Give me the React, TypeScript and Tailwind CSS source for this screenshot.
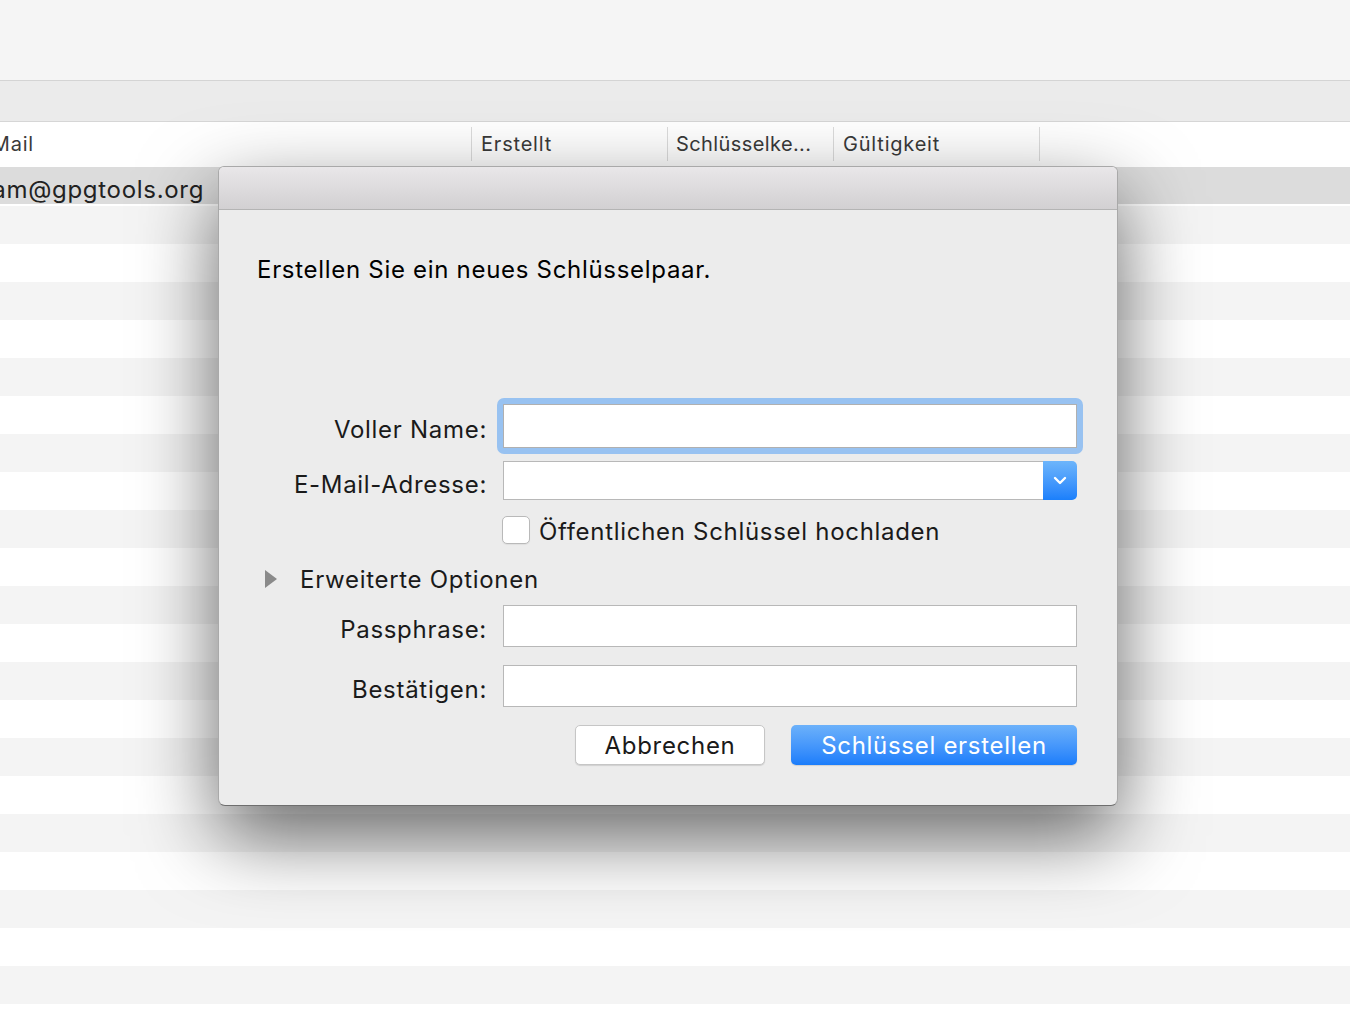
import React from "react";

const font = { fontFamily: "Inter, 'Noto Sans', 'Liberation Sans', sans-serif" };

function Sep() {
  return <div className="h-[34px] w-px shrink-0 self-center bg-[#dcdcdc]" />;
}

function Chevron() {
  return (
    <svg width="14" height="9" viewBox="0 0 14 9" fill="none">
      <path d="M2 2 L7 7 L12 2" stroke="white" strokeWidth="2.4" strokeLinecap="round" strokeLinejoin="round" />
    </svg>
  );
}

export default function App() {
  const rows = Array.from({ length: 22 }, (_, i) => i);
  return (
    <div className="relative h-[1034px] w-[1350px] overflow-hidden bg-white" style={font}>
      {/* toolbar */}
      <div className="h-[81px] border-b border-[#d4d4d4] bg-[#f5f5f5]" />
      <div className="h-[41px] border-b border-[#d6d6d6] bg-[#ebebeb]" />
      {/* header */}
      <div className="flex h-[44px] items-center bg-white text-[20px] tracking-[0.8px] text-[#3a3a3a]">
        <div className="w-[471px] shrink-0 overflow-hidden whitespace-nowrap">
          <span className="ml-[-31px] inline-block">E-Mail</span>
        </div>
        <Sep />
        <div className="w-[195px] shrink-0 pl-[9px]">Erstellt</div>
        <Sep />
        <div className="w-[165px] shrink-0 pl-[8px] whitespace-nowrap tracking-[0.4px]">Schlüsselke...</div>
        <Sep />
        <div className="w-[205px] shrink-0 pl-[9px]">Gültigkeit</div>
        <Sep />
      </div>
      {/* selected row */}
      <div className="h-[40px] bg-white pt-[1px]">
        <div className="flex h-[37px] items-center overflow-hidden whitespace-nowrap bg-[#dcdcdc] pt-[9px] text-[24px] tracking-[0.7px] text-[#222]">
          <span className="ml-[-31px] inline-block">team@gpgtools.org</span>
        </div>
      </div>
      {rows.map((i) => (
        <div key={i} className={i % 2 === 0 ? "h-[38px] bg-[#f4f4f4]" : "h-[38px] bg-white"} />
      ))}

      {/* sheet dialog */}
      <div className="absolute left-[218px] top-[166px] flex w-[900px] flex-col overflow-hidden rounded-b-[7px] rounded-t-[6px] border border-[#a9a9a9] border-b-[#6e6e6e] bg-[#ececec] shadow-[0_30px_80px_rgba(0,0,0,0.6)]">
        <div className="h-[43px] border-b border-[#b4b4b4] bg-gradient-to-b from-[#e9e7e9] to-[#d2d0d2]" />
        <div className="flex flex-col pl-[38px] pr-[40px] pb-[40px] text-[24px] tracking-[0.7px] text-[#1a1a1a]">
          <div className="mt-[46px] h-[28px] leading-[28px] text-black">Erstellen Sie ein neues Schlüsselpaar.</div>

          <div className="mt-[120px] flex h-[44px] items-center">
            <div className="mt-[8px] w-[246px] shrink-0 pr-[16px] text-right whitespace-nowrap">Voller Name:</div>
            <div className="-m-[6px] flex-1 rounded-[7px] bg-[#98c2f1] p-[6px]">
              <div className="h-[44px] border border-[#b0b0b0] bg-white" />
            </div>
          </div>

          <div className="mt-[13px] flex h-[39px] items-center">
            <div className="mt-[9px] w-[246px] shrink-0 pr-[16px] text-right whitespace-nowrap">E-Mail-Adresse:</div>
            <div className="flex h-[39px] flex-1">
              <div className="flex-1 border border-r-0 border-[#b8b8b8] bg-white" />
              <div className="flex w-[34px] items-center justify-center rounded-r-[5px] bg-gradient-to-b from-[#6db5fb] to-[#1a7ffb]">
                <Chevron />
              </div>
            </div>
          </div>

          <div className="mt-[16px] flex h-[28px] items-center">
            <div className="w-[245px] shrink-0" />
            <div className="h-[28px] w-[28px] rounded-[5px] border border-[#b9b9b9] bg-white shadow-[0_1px_1px_rgba(0,0,0,0.06)]" />
            <div className="ml-[9px] mt-[4px] whitespace-nowrap">Öffentlichen Schlüssel hochladen</div>
          </div>

          <div className="mt-[21px] flex h-[28px] items-center">
            <svg width="12" height="18" viewBox="0 0 12 18" className="ml-[8px]">
              <path d="M0 0 L12 9 L0 18 Z" fill="#8a8a8a" />
            </svg>
            <div className="ml-[23px] mt-[2px] whitespace-nowrap">Erweiterte Optionen</div>
          </div>

          <div className="mt-[12px] flex h-[42px] items-center">
            <div className="mt-[8px] w-[246px] shrink-0 pr-[16px] text-right">Passphrase:</div>
            <div className="h-[42px] flex-1 border border-[#b8b8b8] bg-white" />
          </div>

          <div className="mt-[18px] flex h-[42px] items-center">
            <div className="mt-[8px] w-[246px] shrink-0 pr-[16px] text-right">Bestätigen:</div>
            <div className="h-[42px] flex-1 border border-[#b8b8b8] bg-white" />
          </div>

          <div className="mt-[18px] flex h-[40px] justify-end gap-[26px]">
            <button className="h-[40px] w-[190px] rounded-[5px] border border-[#c6c6c6] bg-white pt-[2px] text-[24px] tracking-[0.7px] text-[#1a1a1a] shadow-[0_1px_1px_rgba(0,0,0,0.12)]">
              Abbrechen
            </button>
            <button className="h-[40px] w-[286px] rounded-[5px] bg-gradient-to-b from-[#6cb1fa] to-[#1a7dfb] pt-[2px] text-[24px] tracking-[0.7px] text-white shadow-[0_1px_1px_rgba(0,0,0,0.12)]">
              Schlüssel erstellen
            </button>
          </div>
        </div>
      </div>
    </div>
  );
}
